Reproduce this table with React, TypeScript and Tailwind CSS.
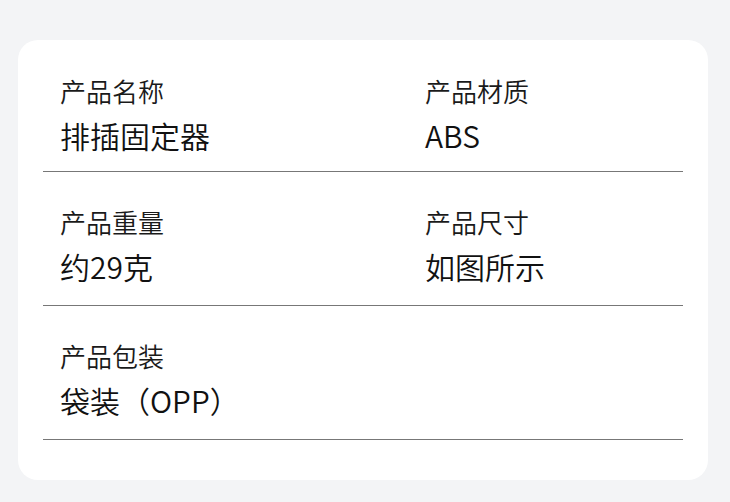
import React from "react";

const rows: { label: string; value: string }[][] = [
  [
    { label: "产品名称", value: "排插固定器" },
    { label: "产品材质", value: "ABS" },
  ],
  [
    { label: "产品重量", value: "约29克" },
    { label: "产品尺寸", value: "如图所示" },
  ],
  [{ label: "产品包装", value: "袋装（OPP）" }],
];

export default function App() {
  return (
    <div
      className="w-[730px] h-[502px] bg-[#f3f4f6] pt-[40px] pl-[18px]"
      style={{ fontFamily: '"Noto Sans CJK SC", "Noto Sans", sans-serif' }}
    >
      <div className="w-[690px] h-[440px] bg-white rounded-[20px] px-[25px]">
        {rows.map((row, i) => (
          <div
            key={i}
            className={
              i === 0
                ? "h-[132px] border-b border-[#777777] grid grid-cols-[365px_1fr] px-[17px] pt-[34px]"
                : "h-[134px] border-b border-[#777777] grid grid-cols-[365px_1fr] px-[17px] pt-[33px]"
            }
          >
            {row.map((cell) => (
              <div key={cell.label} className="flex flex-col">
                <div className="text-[26px] leading-[34px] font-[350] text-[#1a1a1a]">{cell.label}</div>
                <div className="text-[30px] leading-[40px] mt-[7px] font-[350] text-[#111111]">{cell.value}</div>
              </div>
            ))}
          </div>
        ))}
      </div>
    </div>
  );
}
